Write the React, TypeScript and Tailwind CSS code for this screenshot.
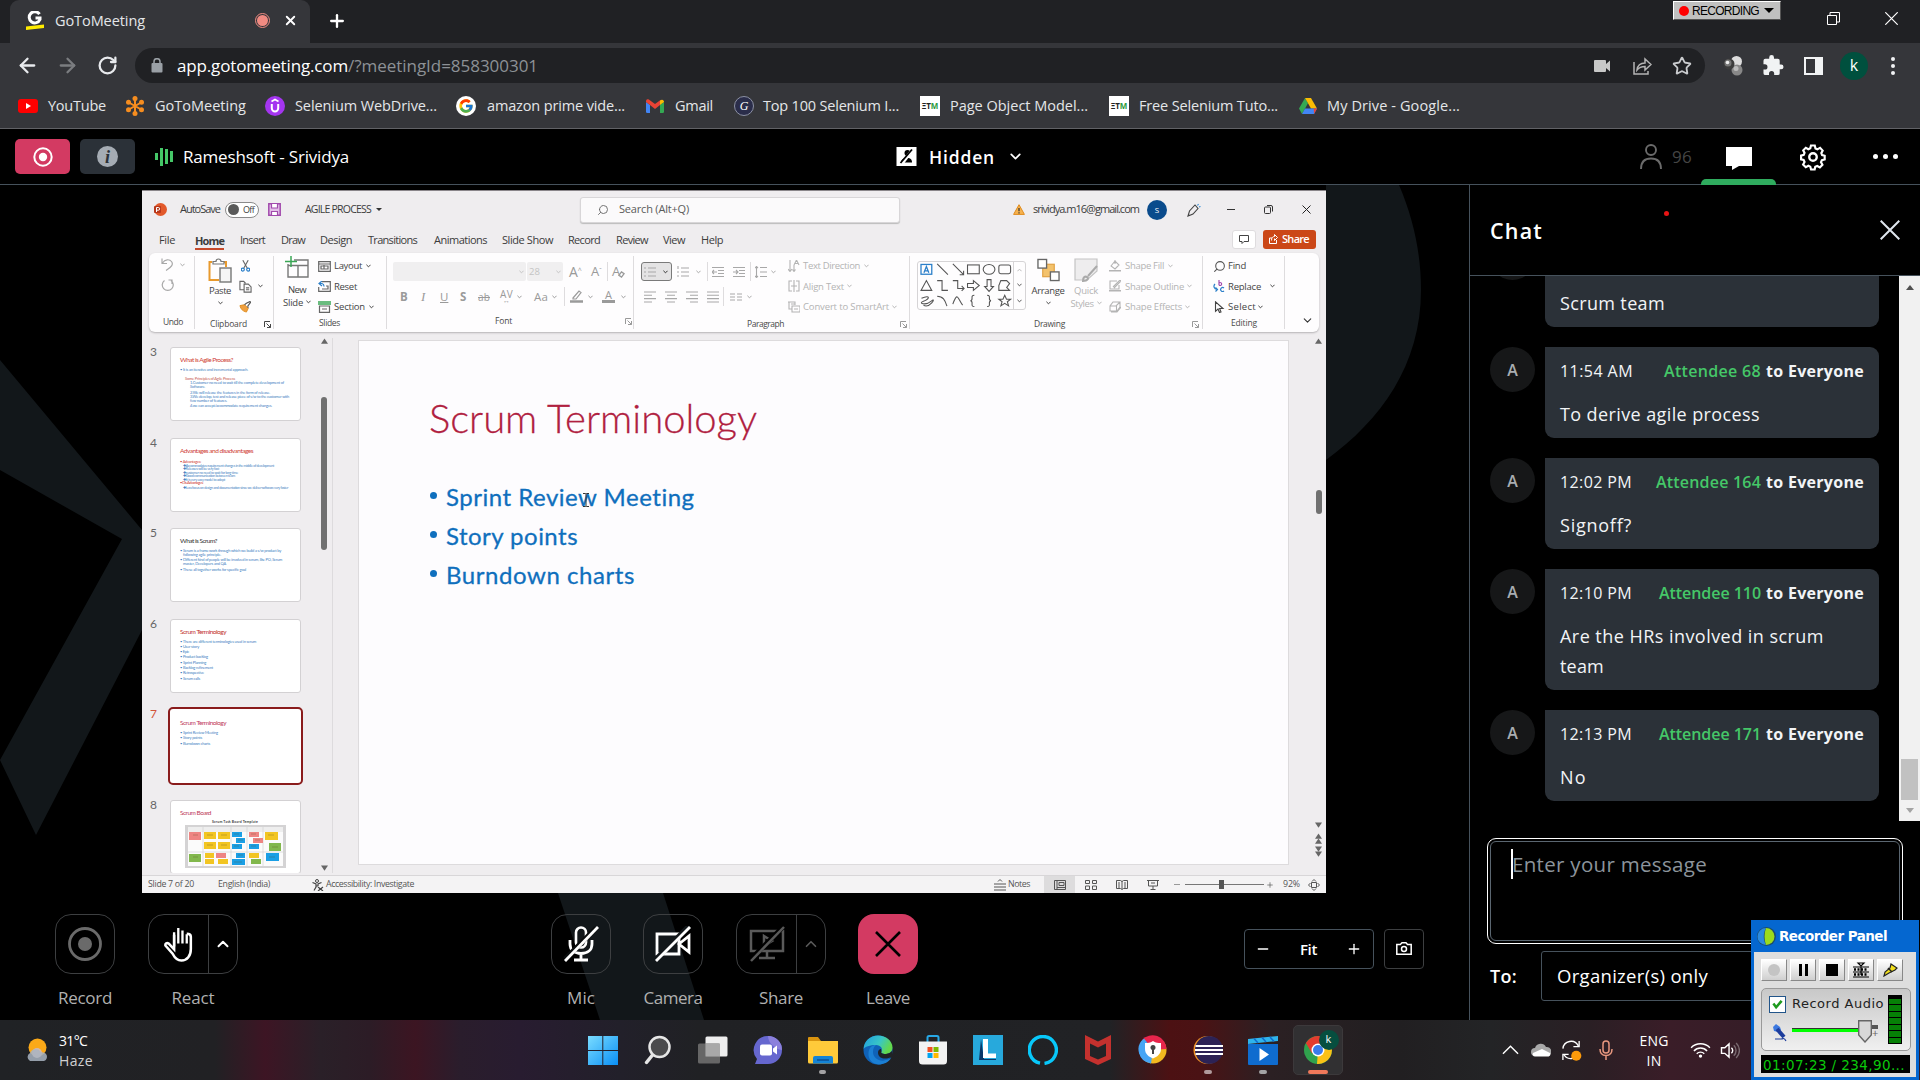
import { useLayoutEffect, useRef, useState, type ReactNode } from "react";
import { ArrowLeft, ArrowRight, Plus, X, RotateCw, ChevronDown, ChevronUp, Star, Minus, Search } from "lucide-react";
import { FcGoogle } from "react-icons/fc";

/* Single-line label whose tracking adapts so that it fills the given width. */
function Fit({ w, className = "", children }: { w: number; className?: string; children: string }) {
  const ref = useRef<HTMLSpanElement>(null);
  const [tracking, setTracking] = useState(0);
  useLayoutEffect(() => {
    const el = ref.current;
    if (!el) return;
    el.style.letterSpacing = "0px";
    setTracking((w - el.getBoundingClientRect().width) / children.length);
  }, [w, children]);
  return (
    <span ref={ref} className={`inline-block shrink-0 whitespace-pre ${className}`} style={{ letterSpacing: `${tracking}px` }}>
      {children}
    </span>
  );
}

function Svg({ box = "0 0 24 24", className, children }: { box?: string; className: string; children: ReactNode }) {
  return (
    <svg viewBox={box} className={`shrink-0 ${className}`} fill="none" stroke="currentColor" strokeWidth={1.5}>
      {children}
    </svg>
  );
}

/* ---------- Browser chrome ---------- */

function TabStrip() {
  return (
    <div className="flex h-[43px] bg-[#202124] pl-[10px]">
      <div className="flex h-[43px] w-[300px] items-center rounded-t-[9px] bg-[#35363a] pb-[2px]">
        <Svg box="0 0 18 19" className="ml-[16px] h-[19px] w-[18px]">
          <path d="M13.500 3.200A5.600 5.600 0 1 0 14 8.500V7H9.500" stroke="#fff" strokeWidth="3" />
          <path d="M0 15.500L18 13.500V17L0 19z" fill="#ffec00" stroke="none" />
        </Svg>
        <Fit w={90} className="ml-[11px] text-[14.5px] text-[#e4e6e9]">GoToMeeting</Fit>
        <div className="ml-[110px] flex size-[15px] items-center justify-center rounded-full border border-[#f28b82]">
          <div className="size-[11px] rounded-full bg-[#f28b82]" />
        </div>
        <X className="ml-[13px] size-[15px] text-white" strokeWidth={3} />
      </div>
      <Plus className="ml-[17px] mt-[11px] size-[20px] text-white" strokeWidth={2.8} />
      <div className="ml-auto flex pt-px">
        <div className="flex h-[19px] w-[108px] items-center border border-t-white border-l-white border-r-[#555] border-b-[#555] bg-[#c0c0c0] pl-[5px] font-['Liberation_Sans'] text-black">
          <div className="size-[10px] rounded-full bg-[#f00]" />
          <Fit w={67} className="ml-[3px] text-[12px]">RECORDING</Fit>
          <div className="ml-[5px] h-0 w-0 border-x-[5px] border-t-[5px] border-x-transparent border-t-black" />
        </div>
        <Svg box="0 0 13 13" className="ml-[46px] mt-[11px] size-[13px] text-white">
          <path d="M.5 3.500h9v9h-9zM3 3.500v-3h9.500v9.500h-3" strokeWidth="1" />
        </Svg>
        <Svg box="0 0 13 13" className="ml-[45px] mr-[22px] mt-[11px] size-[13px] text-white">
          <path d="M.3.3l12.400 12.400M12.700.3L.3 12.700" strokeWidth="1.200" />
        </Svg>
      </div>
    </div>
  );
}

function AddressRow() {
  return (
    <div className="flex h-[45px] items-center bg-[#35363a]">
      <ArrowLeft className="ml-[16px] size-[23px] text-[#e8eaed]" strokeWidth={2.4} />
      <ArrowRight className="ml-[17px] size-[23px] text-[#7b7d80]" strokeWidth={2.4} />
      <RotateCw className="ml-[18px] size-[21px] text-[#e8eaed]" strokeWidth={2.6} />
      <div className="ml-[17px] flex h-[35px] w-[1570px] items-center rounded-full bg-[#202124]">
        <Svg box="0 0 12 15" className="ml-[16px] h-[15px] w-[12px] text-[#9aa0a6]">
          <rect x="0.500" y="5" width="11" height="9.500" rx="1" fill="currentColor" stroke="none" />
          <path d="M3 6V3.700a3 3 0 0 1 6 0V6" />
        </Svg>
        <Fit w={171} className="ml-[14px] text-[17px] text-white">app.gotomeeting.com</Fit>
        <Fit w={190} className="text-[17px] text-[#8d9196]">/?meetingId=858300301</Fit>
        <Svg box="0 0 16 12" className="ml-auto h-[12px] w-[16px] text-[#c8c8c8]">
          <path d="M1 0h10a1 1 0 0 1 1 1v3l4-3.500v11L12 8v3a1 1 0 0 1-1 1H1a1 1 0 0 1-1-1V1a1 1 0 0 1 1-1z" fill="currentColor" stroke="none" />
        </Svg>
        <Svg box="0 0 19 18" className="ml-[23px] h-[18px] w-[19px] text-[#b4b4b4]">
          <path d="M1 5v12h14v-3M4 13c.5-4 3-7 8-7V2l6 5.500-6 5.500V9.500C8 9.500 6 10.500 4 13z" />
        </Svg>
        <Star className="ml-[20px] mr-[13px] size-[20px] text-[#c9cbce]" strokeWidth={2.2} />
      </div>
      <Svg box="0 0 20 20" className="ml-[18px] size-[20px]">
        <circle cx="13.500" cy="5.500" r="5.500" fill="#ddd" stroke="none" />
        <circle cx="14" cy="14" r="5.500" fill="#888" stroke="none" />
        <circle cx="13" cy="12.500" r="2.500" fill="#bbb" stroke="none" />
        <circle cx="6" cy="8" r="5.500" fill="#3c3c3c" stroke="none" />
        <circle cx="5" cy="7" r="3.500" fill="#777" stroke="none" />
        <circle cx="4.500" cy="6.500" r="1.800" fill="#eee" stroke="none" />
      </Svg>
      <svg viewBox="0 0 22 22" className="ml-[20px] size-[21px] shrink-0 fill-[#f1f3f4]">
        <path d="M19 10.500h-1.500V6.500a2 2 0 0 0-2-2h-4V3a2.500 2.500 0 0 0-5 0v1.500h-4a2 2 0 0 0-2 2v3.800H2a2.700 2.700 0 0 1 0 5.400H.5v3.800a2 2 0 0 0 2 2h3.800V20a2.700 2.700 0 0 1 5.400 0v1.500h3.800a2 2 0 0 0 2-2v-4H19a2.500 2.500 0 0 0 0-5z" transform="translate(0 -.5)" />
      </svg>
      <div className="ml-[20px] flex h-[18px] w-[19px] border-[2.500px] border-[#f1f3f4]">
        <div className="ml-auto w-[6px] bg-[#f1f3f4]" />
      </div>
      <div className="ml-[17px] flex size-[28px] items-center justify-center rounded-full bg-[#00503e] pb-px text-[16px] text-white">k</div>
      <div className="ml-[23px] flex flex-col gap-[3px]">
        <div className="size-[4px] rounded-full bg-[#f1f3f4]" />
        <div className="size-[4px] rounded-full bg-[#f1f3f4]" />
        <div className="size-[4px] rounded-full bg-[#f1f3f4]" />
      </div>
    </div>
  );
}

function EtmIcon({ className }: { className: string }) {
  return (
    <div className={`flex h-[20px] w-[20px] shrink-0 items-center justify-center overflow-hidden bg-white text-[8px] font-bold leading-none text-[#222] ${className}`}>
      ΞT<span className="text-[#2c9a40]">M</span>
    </div>
  );
}

function Bookmarks() {
  const text = "text-[14.5px] text-[#e4e6e9]";
  return (
    <div className="flex h-[41px] items-center border-b border-[#616266] bg-[#35363a] pb-[4px]">
      <Svg box="0 0 20 14" className="ml-[18px] h-[14px] w-[20px]">
        <rect width="20" height="14" rx="3" fill="#f00" stroke="none" />
        <path d="M8 4l5 3-5 3z" fill="#fff" stroke="none" />
      </Svg>
      <Fit w={58} className={`ml-[10px] ${text}`}>YouTube</Fit>
      <Svg box="0 0 20 20" className="ml-[19px] size-[20px] text-[#f68d1f]">
        <path d="M10 2v16M3 6l14 8M17 6L3 14" strokeWidth="2" />
        <g fill="currentColor" stroke="none">
          <circle cx="10" cy="2.500" r="2.500" /><circle cx="10" cy="17.500" r="2.500" />
          <circle cx="3.500" cy="6.200" r="2.500" /><circle cx="16.500" cy="6.200" r="2.500" />
          <circle cx="3.500" cy="13.800" r="2.500" /><circle cx="16.500" cy="13.800" r="2.500" />
        </g>
      </Svg>
      <Fit w={91} className={`ml-[10px] ${text}`}>GoToMeeting</Fit>
      <Svg box="0 0 20 20" className="ml-[19px] size-[20px]">
        <circle cx="10" cy="10" r="10" fill="#a435f0" stroke="none" />
        <path d="M6.800 8v4.300a3.200 3.200 0 0 0 6.400 0V8" stroke="#fff" strokeWidth="2" />
        <path d="M6.500 5.500L10 3.500l3.500 2" stroke="#fff" strokeWidth="1.700" />
      </Svg>
      <Fit w={142} className={`ml-[10px] ${text}`}>Selenium WebDrive...</Fit>
      <div className="ml-[19px] flex size-[20px] shrink-0 items-center justify-center rounded-full bg-white">
        <FcGoogle className="size-[16px]" />
      </div>
      <Fit w={138} className={`ml-[11px] ${text}`}>amazon prime vide...</Fit>
      <Svg box="0 0 18 14" className="ml-[21px] h-[14px] w-[18px]">
        <g stroke="none">
          <path d="M0 3l4 3v8H1.200A1.200 1.200 0 0 1 0 12.800z" fill="#4285f4" />
          <path d="M18 3l-4 3v8h2.800a1.200 1.200 0 0 0 1.200-1.200z" fill="#34a853" />
          <path d="M0 3V2a2 2 0 0 1 3.500-1L9 5v5L4 6z" fill="#ea4335" />
          <path d="M9 5l5.500-4L14 6l-5 4z" fill="#ea4335" />
          <path d="M14 1.500L15 1a2 2 0 0 1 3 1.500V3l-4 3z" fill="#fbbc04" />
        </g>
      </Svg>
      <Fit w={38} className={`ml-[11px] ${text}`}>Gmail</Fit>
      <div className="ml-[21px] flex size-[20px] shrink-0 items-center justify-center rounded-full border border-[#8b90a3] bg-[#2a2d4a] font-['Liberation_Serif'] text-[12px] italic text-white">G</div>
      <Fit w={136} className={`ml-[9px] ${text}`}>Top 100 Selenium I...</Fit>
      <EtmIcon className="ml-[21px]" />
      <Fit w={138} className={`ml-[10px] ${text}`}>Page Object Model...</Fit>
      <EtmIcon className="ml-[21px]" />
      <Fit w={139} className={`ml-[10px] ${text}`}>Free Selenium Tuto...</Fit>
      <Svg box="0 0 18 16" className="ml-[21px] h-[16px] w-[18px]">
        <g stroke="none">
          <path d="M6 0L0 10.500 3 16 9 5.300z" fill="#34a853" />
          <path d="M6 0h6l6 10.500h-6z" fill="#fbbc04" />
          <path d="M6 10.500h12L15 16H3z" fill="#4285f4" />
          <path d="M14.800 10.500H18L15 16z" fill="#ea4335" />
        </g>
      </Svg>
      <Fit w={133} className={`ml-[10px] ${text}`}>My Drive - Google...</Fit>
    </div>
  );
}

/* ---------- Meeting header ---------- */

function MeetingHeader() {
  return (
    <div className="flex h-[56px] items-center border-b border-[#46525c] bg-black">
      <div className="ml-[15px] flex h-[35px] w-[55px] items-center justify-center rounded-[5px] bg-[#d33a62]">
        <Svg box="0 0 20 20" className="size-[20px] text-white">
          <circle cx="10" cy="10" r="8.700" strokeWidth="2" />
          <circle cx="10" cy="10" r="4.200" fill="currentColor" stroke="none" />
        </Svg>
      </div>
      <div className="ml-[10px] flex h-[35px] w-[55px] items-center justify-center rounded-[5px] bg-[#2b3138]">
        <div className="flex size-[21px] items-center justify-center rounded-full bg-[#a5acb4] font-['Liberation_Serif'] text-[18px] font-bold italic leading-none text-[#2b3138]">i</div>
      </div>
      <div className="ml-[20px] flex h-[18px] w-[18px] items-center justify-between">
        <div className="h-[7px] w-[3px] bg-[#45c768]" />
        <div className="h-[18px] w-[3px] bg-[#45c768]" />
        <div className="h-[15px] w-[3px] bg-[#45c768]" />
        <div className="h-[11px] w-[3px] bg-[#45c768]" />
      </div>
      <Fit w={166} className="ml-[10px] text-[17px] text-white">Rameshsoft - Srividya</Fit>
      <Svg box="0 0 20 19" className="ml-[547px] h-[19px] w-[21px]">
        <rect width="20" height="19" fill="#fff" stroke="none" />
        <circle cx="11" cy="6" r="3" fill="#000" stroke="none" />
        <path d="M4.500 15.500c0-2.500 2-4.500 6-4.500s5 2 5 4.500z" fill="#000" stroke="none" />
        <path d="M5 17.500L16 2.500" stroke="#fff" strokeWidth="3" />
        <path d="M4 16L15.500 2.500" stroke="#000" strokeWidth="1.800" />
      </Svg>
      <Fit w={66} className="ml-[12px] mt-[2px] text-[17.5px] font-semibold text-white">Hidden</Fit>
      <ChevronDown className="ml-[12px] size-[17px] text-white" strokeWidth={2.4} />
      <div className="ml-auto flex items-center">
        <Svg box="0 0 22 25" className="h-[25px] w-[22px] text-[#6b6b6b]">
          <circle cx="11" cy="6" r="5" strokeWidth="1.900" />
          <path d="M1 25c0-7 4-10.500 10-10.500S21 18 21 25" strokeWidth="1.900" />
        </Svg>
        <Fit w={20} className="ml-[10px] text-[17px] text-[#454545]">96</Fit>
        <div className="ml-[9px] flex h-[56px] w-[75px] flex-col items-center justify-end">
          <Svg box="0 0 26 23" className="mb-[9px] h-[23px] w-[26px]">
            <path d="M0 0h26v19H13l-7 4v-4H0z" fill="#fff" stroke="none" />
          </Svg>
          <div className="h-[6px] w-[75px] rounded-t-[5px] bg-[#2fab5e]" />
        </div>
        <Svg className="ml-[22px] size-[30px] text-white">
          <path d="M10.300 2h3.400l.6 2.600 1.700.8 2.400-1.300 2.300 2.400-1.200 2.300.7 1.700 2.300.7v3.200l-2.500.7-.8 1.700 1.300 2.300-2.300 2.400-2.300-1.300-1.800.8-.5 2.300h-3.200l-.7-2.500-1.700-.8-2.300 1.300-2.400-2.400 1.300-2.300-.8-1.700-2.300-.6v-3.300l2.400-.7.7-1.700-1.200-2.300L5.700 4l2.300 1.300 1.700-.8z" strokeWidth="1.900" transform="translate(1.100 1) scale(.9)" />
          <circle cx="12" cy="12" r="3" strokeWidth="1.900" />
        </Svg>
        <div className="ml-[45px] mr-[22px] flex gap-[5px]">
          <div className="size-[5px] rounded-full bg-white" />
          <div className="size-[5px] rounded-full bg-white" />
          <div className="size-[5px] rounded-full bg-white" />
        </div>
      </div>
    </div>
  );
}

/* ---------- Shared PowerPoint window ---------- */

function Chev({ className = "" }: { className?: string }) {
  return (
    <svg viewBox="0 0 6 4" className={`h-[4px] w-[5px] shrink-0 ${className}`} fill="none" stroke="currentColor" strokeWidth="1.200">
      <path d="M.5.5L3 3 5.500.5" />
    </svg>
  );
}

function Launcher({ className }: { className: string }) {
  return (
    <Svg box="0 0 7 7" className={`size-[7px] ${className}`}>
      <path d="M.5 6V.5H6M2.500 2.500l4 4M6.500 3v3.500H3" strokeWidth="1" />
    </Svg>
  );
}

function PptTitleBar() {
  return (
    <div className="flex h-[37px] items-center text-[11px] text-[#3c3c3c]">
      <Svg box="0 0 13 13" className="ml-[12px] size-[13px]">
        <circle cx="6.500" cy="6.500" r="6.500" fill="#e2592b" stroke="none" />
        <rect x="0" y="3" width="7" height="7" rx="1" fill="#b7371a" stroke="none" />
        <path d="M2.500 9V4.500h1.800a1.300 1.300 0 0 1 0 2.700H2.500" stroke="#fff" strokeWidth="1" />
      </Svg>
      <Fit w={40} className="ml-[13px]">AutoSave</Fit>
      <div className="ml-[5px] flex h-[16px] w-[34px] items-center rounded-full border border-[#8a8a8a] bg-white pl-[2px]">
        <div className="size-[11px] rounded-full bg-[#5a5a5a]" />
        <Fit w={11} className="ml-[4px] text-[9px]">Off</Fit>
      </div>
      <Svg box="0 0 13 13" className="ml-[9px] size-[13px] text-[#a24bad]">
        <path d="M.8.8h11.400v11.400H.8z" fill="#e3bfe8" />
        <path d="M3.500 1v4h6V1M3.500 12V8.500h6V12" fill="#fff" strokeWidth="1.200" />
      </Svg>
      <Fit w={66} className="ml-[24px] text-[10.5px]">AGILE PROCESS</Fit>
      <div className="ml-[5px] h-0 w-0 border-x-[3px] border-t-[3px] border-x-transparent border-t-[#333]" />
      <div className="ml-[198px] flex h-[26px] w-[320px] items-center rounded-[3px] border border-[#d8d6d8] bg-[#fbfafb] shadow-[0_1px_1px_#bbb]">
        <Search className="ml-[16px] size-[12px] -scale-x-100 text-[#666]" strokeWidth={1.8} />
        <Fit w={70} className="ml-[10px] text-[11px] text-[#5a5a5a]">Search (Alt+Q)</Fit>
      </div>
      <Svg box="0 0 12 11" className="ml-[113px] h-[11px] w-[12px]">
        <path d="M6 .7L11.400 10.400H.6z" fill="#f6b24f" stroke="#e08b1c" strokeWidth="1" />
        <path d="M6 4v3.300M6 8.200v1.200" stroke="#333" strokeWidth="1.200" />
      </Svg>
      <Fit w={106} className="ml-[8px]">srividya.m16@gmail.com</Fit>
      <div className="ml-[8px] flex size-[20px] items-center justify-center rounded-full bg-[#0a4b8c] text-[8px] text-white">S</div>
      <Svg box="0 0 14 14" className="ml-[20px] size-[14px] text-[#444]">
        <path d="M1 13l1.500-5L8 2l3 3.500-5 5.500zM3 12l-2 1" strokeWidth="1.100" />
        <path d="M10.500 2.500l1-1.500M12 4l1.500-.5" stroke="#2b8ad6" strokeWidth="1.100" />
      </Svg>
      <div className="ml-[26px] h-px w-[8px] bg-[#333]" />
      <Svg box="0 0 9 9" className="ml-[29px] size-[9px] text-[#333]">
        <path d="M.5 3a1 1 0 0 1 1-1H5.500a1 1 0 0 1 1 1v4.500a1 1 0 0 1-1 1h-4a1 1 0 0 1-1-1zM3 .5h4A1.500 1.500 0 0 1 8.500 2v4.500" strokeWidth="1" />
      </Svg>
      <Svg box="0 0 9 9" className="ml-[29px] size-[9px] text-[#222]">
        <path d="M.5.5l8 8M8.500.5l-8 8" strokeWidth="1" />
      </Svg>
    </div>
  );
}

function PptTabs() {
  return (
    <div className="flex h-[25px] items-center text-[11px] text-[#3c3c3c]">
      <Fit w={16} className="ml-[17px]">File</Fit>
      <div className="ml-[20px] border-b-2 border-[#c5492a] pt-[2px] leading-[15px]">
        <Fit w={29} className="font-bold">Home</Fit>
      </div>
      <Fit w={25} className="ml-[16px]">Insert</Fit>
      <Fit w={24} className="ml-[16px]">Draw</Fit>
      <Fit w={32} className="ml-[15px]">Design</Fit>
      <Fit w={49} className="ml-[16px]">Transitions</Fit>
      <Fit w={53} className="ml-[17px]">Animations</Fit>
      <Fit w={51} className="ml-[15px]">Slide Show</Fit>
      <Fit w={32} className="ml-[15px]">Record</Fit>
      <Fit w={32} className="ml-[16px]">Review</Fit>
      <Fit w={22} className="ml-[15px]">View</Fit>
      <Fit w={22} className="ml-[16px]">Help</Fit>
      <div className="ml-auto mb-[3px] flex h-[19px] w-[24px] items-center justify-center rounded-[3px] border border-[#dedcde] bg-white">
        <Svg box="0 0 10 9" className="h-[9px] w-[10px] text-[#444]">
          <path d="M.5.5h9v6H5L3 8.500v-2H.5z" strokeWidth="1" />
        </Svg>
      </div>
      <div className="mb-[3px] ml-[7px] mr-[10px] flex h-[19px] w-[53px] items-center rounded-[3px] bg-[#cb4717] text-white">
        <Svg box="0 0 9 10" className="ml-[6px] h-[10px] w-[9px]">
          <path d="M3 4H.5v5.500h7V6M2.500 6.500c0-3 1.500-4 3-4V.5l3 3-3 3v-2" strokeWidth="1" />
        </Svg>
        <Fit w={27} className="ml-[4px] font-semibold">Share</Fit>
      </div>
    </div>
  );
}

function GroupLabel({ w, children, className = "" }: { w: number; children: string; className?: string }) {
  return (
    <div className={`flex h-[15px] items-center text-[8.500px] text-[#4a4a4a] ${className}`}>
      <Fit w={w}>{children}</Fit>
    </div>
  );
}

function Lines({ className, rows }: { className: string; rows: string }) {
  return (
    <Svg box="0 0 12 12" className={`size-[12px] ${className}`}>
      <path d={rows} strokeWidth="1.100" />
    </Svg>
  );
}

function Ribbon() {
  const row = "flex h-[20.500px] items-center";
  return (
    <div className="ml-[7px] flex h-[79px] w-[1170px] rounded-[6px] bg-[#fefdfe] text-[9.500px] leading-none text-[#444] shadow-[0_1px_2px_#b5b3b5]">
      {/* Undo */}
      <div className="my-[3px] flex w-[46px] flex-col border-r border-[#dedcde]">
        <div className="flex h-[61px] flex-col pl-[12px] pt-[2px] text-[#a8a8a8]">
          <div className="flex items-center">
            <Svg box="0 0 12 13" className="h-[13px] w-[12px]">
              <path d="M1 .5v5h5M1.500 5C4 1 8.500 1 10.500 3.500S11 9 5 12.500" strokeWidth="1.200" />
            </Svg>
            <Chev className="ml-[7px]" />
          </div>
          <Svg box="0 0 13 13" className="mt-[8px] size-[13px]">
            <path d="M3.500 1.500a5.500 5.500 0 1 0 6.500 0M7.500 1H11v4" strokeWidth="1.200" />
          </Svg>
        </div>
        <GroupLabel w={20} className="pl-[14px]">Undo</GroupLabel>
      </div>
      {/* Clipboard */}
      <div className="my-[3px] flex w-[79px] flex-col border-r border-[#dedcde]">
        <div className="flex h-[61px]">
          <div className="ml-[13px] flex w-[24px] flex-col items-center pt-[2px]">
            <Svg box="0 0 24 25" className="h-[25px] w-[24px]">
              <path d="M4 4H1.500v18H11" stroke="#e89a2e" strokeWidth="2" />
              <path d="M15 4h3v5" stroke="#e89a2e" strokeWidth="2" />
              <path d="M5 6V3.500h3a2.500 2.500 0 0 1 5 0h3V6z" fill="#fff" stroke="#777" strokeWidth="1.200" />
              <rect x="12" y="10" width="11" height="14" fill="#f5f5f5" stroke="#777" strokeWidth="1.400" />
            </Svg>
            <Fit w={22} className="mt-[3px]">Paste</Fit>
            <Chev className="mt-[5px]" />
          </div>
          <div className="ml-[7px] flex flex-col">
            <div className={row}>
              <Svg box="0 0 10 13" className="ml-[2px] h-[12px] w-[9px]">
                <path d="M2 0l5 9M8 0L3 9" stroke="#666" strokeWidth="1.200" />
                <circle cx="2" cy="10.500" r="1.700" stroke="#2b7fc9" strokeWidth="1.300" />
                <circle cx="8" cy="10.500" r="1.700" stroke="#2b7fc9" strokeWidth="1.300" />
              </Svg>
            </div>
            <div className={row}>
              <Svg box="0 0 14 13" className="h-[13px] w-[13px] text-[#666]">
                <path d="M5 10H1V1h4l2 2M5.500 4h4.500l3 3v5.500H5.500zM7.500 8h3.500M7.500 10h3.500" strokeWidth="1.200" />
              </Svg>
              <Chev className="ml-[6px]" />
            </div>
            <div className={row}>
              <Svg box="0 0 13 13" className="size-[12px]">
                <path d="M1 5l5-1 4 4-2 4C4 11 2 9 1 5z" fill="#f0a040" stroke="#e08b1c" strokeWidth="1" />
                <path d="M6 4l2 -1.500L12 .5l.5 1-3 4 .5 2" stroke="#555" strokeWidth="1.200" />
              </Svg>
            </div>
          </div>
        </div>
        <div className="flex items-center">
          <GroupLabel w={37} className="ml-[15px]">Clipboard</GroupLabel>
          <Launcher className="ml-[17px]" />
        </div>
      </div>
      {/* Slides */}
      <div className="my-[3px] flex w-[113px] flex-col border-r border-[#dedcde]">
        <div className="flex h-[61px]">
          <div className="ml-[9px] flex w-[28px] flex-col items-center">
            <Svg box="0 0 24 22" className="h-[22px] w-[24px]">
              <path d="M3 8v13h20V4H9M3 9.500h20M13 9.500V21" stroke="#777" strokeWidth="1.400" />
              <path d="M6 0v11M0 5.500h12" stroke="#3aa655" strokeWidth="1.500" />
            </Svg>
            <Fit w={18} className="mt-[7px]">New</Fit>
            <div className="mt-[3px] flex items-center gap-[3px]">
              <Fit w={20}>Slide</Fit>
              <Chev />
            </div>
          </div>
          <div className="ml-[7px] flex flex-col">
            <div className={row}>
              <Svg box="0 0 13 11" className="h-[11px] w-[13px] text-[#666]">
                <path d="M.7.7h11.600v9.600H.7zM1 3h11M6 4v4h4V5H3v3h3" strokeWidth="1.200" />
              </Svg>
              <Fit w={28} className="ml-[3px]">Layout</Fit>
              <Chev className="ml-[4px]" />
            </div>
            <div className={row}>
              <Svg box="0 0 13 11" className="h-[11px] w-[13px] text-[#666]">
                <path d="M4 .7h8.300v9.600H.7V6M8 5h2v3H4" strokeWidth="1.200" />
                <path d="M4 0L1 2.500 4 5M1 2.500h3a3 3 0 0 1 2 3" stroke="#2b7fc9" strokeWidth="1.200" />
              </Svg>
              <Fit w={23} className="ml-[3px]">Reset</Fit>
            </div>
            <div className={row}>
              <Svg box="0 0 13 12" className="h-[12px] w-[13px] text-[#666]">
                <path d="M0 1h13M0 3h13" stroke="#3aa655" strokeWidth="1.300" />
                <path d="M1.500 5h10v6.300h-10zM4 8h5" strokeWidth="1.200" />
              </Svg>
              <Fit w={31} className="ml-[3px]">Section</Fit>
              <Chev className="ml-[4px]" />
            </div>
          </div>
        </div>
        <GroupLabel w={21} className="pl-[45px]">Slides</GroupLabel>
      </div>
      {/* Font */}
      <div className="my-[3px] flex w-[247px] flex-col border-r border-[#dedcde] text-[#9a9a9a]">
        <div className="flex h-[61px] flex-col pl-[6px] pt-[6px]">
          <div className="flex h-[19px] items-center">
            <div className="flex h-[19px] w-[133px] items-center justify-end rounded-[2px] bg-[#f0eff0] pr-[2px] text-[#c4c4c4]"><Chev /></div>
            <div className="ml-px flex h-[19px] w-[36px] items-center rounded-[2px] bg-[#f0eff0] pl-[2px] text-[#c4c4c4]">
              <Fit w={11}>28</Fit><Chev className="ml-auto mr-[2px]" />
            </div>
            <span className="ml-[6px] text-[14px]">A<sup className="text-[7px]">^</sup></span>
            <span className="ml-[9px] text-[13px]">A<sup className="text-[7px]">ˇ</sup></span>
            <div className="ml-[5px] h-[19px] w-px bg-[#dedcde]" />
            <span className="ml-[4px] text-[13px]">A</span>
            <Svg box="0 0 8 8" className="mt-[6px] -ml-[2px] size-[7px]"><path d="M1 5l3-4 3 2-3 4z" /></Svg>
          </div>
          <div className="mt-[6px] flex h-[19px] items-center text-[11.500px]">
            <b className="ml-[7px] w-[20px]">B</b>
            <i className="w-[20px] pl-px font-['Liberation_Serif'] text-[13px]">I</i>
            <u className="w-[20px]">U</u>
            <b className="w-[18px]">S</b>
            <s className="w-[22px]"><Fit w={12} className="text-[10px] line-through">ab</Fit></s>
            <span className="flex w-[13px] flex-col items-center leading-[9px] text-[10px]"><Fit w={13}>AV</Fit><span className="text-[7px] leading-[4px]">↔</span></span>
            <Chev className="ml-[4px]" />
            <Fit w={14} className="ml-[12px]">Aa</Fit>
            <Chev className="ml-[4px]" />
            <div className="ml-[7px] h-[19px] w-px bg-[#dedcde]" />
            <Svg box="0 0 13 13" className="ml-[5px] size-[13px]">
              <path d="M3 8l6-7 2 1.500L6 9H3z" strokeWidth="1.200" /><path d="M0 11.500h13" strokeWidth="2.500" />
            </Svg>
            <Chev className="ml-[5px]" />
            <span className="ml-[9px] w-[13px] border-b-[3px] border-[#9a9a9a] text-center text-[11px] leading-[10px]">A</span>
            <Chev className="ml-[6px]" />
          </div>
        </div>
        <div className="flex items-center">
          <GroupLabel w={17} className="ml-[108px]">Font</GroupLabel>
          <Launcher className="ml-[113px] text-[#999]" />
        </div>
      </div>
      {/* Paragraph */}
      <div className="my-[3px] flex w-[276px] flex-col border-r border-[#dedcde] text-[#a8a8a8]">
        <div className="flex h-[61px]">
          <div className="flex w-[154px] flex-col pl-[7px] pt-[6px]">
            <div className="flex h-[19px] items-center">
              <div className="flex h-[19px] w-[31px] items-center rounded-[3px] border border-[#7a7a7a] bg-[#e4e3e4] pl-[2px]">
                <Lines className="" rows="M0 2h2M0 6h2M0 10h2M4 2h8M4 6h8M4 10h8" />
                <Chev className="ml-[7px] text-[#333]" />
              </div>
              <Lines className="ml-[5px]" rows="M1 0v3M0 6h2M0 10h2M4 2h8M4 6h8M4 10h8" />
              <Chev className="ml-[7px]" />
              <div className="ml-[6px] h-[19px] w-px bg-[#dedcde]" />
              <Lines className="ml-[4px]" rows="M0 1.500h12M6 4.500h6M6 7.500h6M0 10.500h12M5 6H0M2 4L0 6l2 2" />
              <Lines className="ml-[9px]" rows="M0 1.500h12M6 4.500h6M6 7.500h6M0 10.500h12M0 6h5M3 4l2 2-2 2" />
              <div className="ml-[5px] h-[19px] w-px bg-[#dedcde]" />
              <Lines className="ml-[4px]" rows="M1.500 0v12M0 2l1.500-1.500L3 2M0 10l1.500 1.500L3 10M5 1.500h7M5 6h7M5 10.500h7" />
              <Chev className="ml-[4px]" />
            </div>
            <div className="mt-[6px] flex h-[19px] items-center">
              <Lines className="ml-[3px]" rows="M0 1h12M0 4.300h8M0 7.600h12M0 11h8" />
              <Lines className="ml-[9px]" rows="M0 1h12M2 4.300h8M0 7.600h12M2 11h8" />
              <Lines className="ml-[9px]" rows="M0 1h12M4 4.300h8M0 7.600h12M4 11h8" />
              <Lines className="ml-[9px]" rows="M0 1h12M0 4.300h12M0 7.600h12M0 11h12" />
              <div className="ml-[4px] h-[19px] w-px bg-[#dedcde]" />
              <Lines className="ml-[6px]" rows="M0 3h5M7 3h5M0 6h5M7 6h5M0 9h5M7 9h5" />
              <Chev className="ml-[5px]" />
            </div>
          </div>
          <div className="flex flex-col text-[#b4b4b4]">
            <div className={row}>
              <Lines className="" rows="M2 0v11M0 9l2 2.500L4 9M6 11V5M4.500 9.500L6 11.500 7.500 9.500M6 5l2.500-5L11 5M7 3.500h3" />
              <Fit w={57} className="ml-[3px]">Text Direction</Fit>
              <Chev className="ml-[4px]" />
            </div>
            <div className={row}>
              <Lines className="" rows="M4 1H1v10h3M8 1h3v10H8M6 0v12M3 6h6" />
              <Fit w={41} className="ml-[3px]">Align Text</Fit>
              <Chev className="ml-[3px]" />
            </div>
            <div className={row}>
              <Lines className="" rows="M0 1h7v3M1 1v7h3M4 5h8v6H4zM6 8h4M3 3h4" />
              <Fit w={86} className="ml-[3px]">Convert to SmartArt</Fit>
              <Chev className="ml-[3px]" />
            </div>
          </div>
        </div>
        <div className="flex items-center">
          <GroupLabel w={37} className="ml-[113px]">Paragraph</GroupLabel>
          <Launcher className="ml-[116px] text-[#999]" />
        </div>
      </div>
      {/* Drawing */}
      <div className="my-[3px] flex w-[293px] flex-col border-r border-[#dedcde]">
        <div className="flex h-[61px]">
          <div className="ml-[7px] mt-[5px] flex h-[49px] w-[109px] rounded-[3px] border border-[#d6d4d6] text-[#555]">
            <svg viewBox="0 0 96 48" className="h-[47px] w-[96px]" fill="none" stroke="currentColor" strokeWidth="1.100">
              <rect x="2.500" y="2.500" width="11" height="10" stroke="#2b7fc9" strokeWidth="1.300" />
              <path d="M5.500 11L8 4.500 10.500 11M6.500 9h3" stroke="#2b7fc9" strokeWidth="1.300" />
              <path d="M19 2l11 11M35 2l11 11M46 9v4h-4" />
              <rect x="50" y="3" width="12" height="9" />
              <ellipse cx="72" cy="7.500" rx="6" ry="5" />
              <rect x="82" y="3" width="12" height="9" rx="2" />
              <path d="M2.500 29L8 19l5.500 10zM19 19h5v10h6M35 19h5v8h6M44 24.500l2.500 2.500-2.500 2.500" />
              <path d="M50 22h6v-3l6 5-6 5v-3h-6zM70 18v7h-2.500l4.500 5 4.500-5H74v-7zM90 19h-6l-2 5v5h11l-3-3 3-4z" />
              <path d="M3 37c10-4 8 1 2 3s2 5 8 0-2 8-8 4M19 35c6 0 8 4 10 10M35 43c5-14 5-5 10 1M57 34c-5 0 0 5-4 5.500 4 .5-1 6 4 6M70 34c5 0 0 5 4 5.500-4 .5 1 6-4 6M88 34l1.800 4h4.200l-3.300 2.600 1.200 4.200-3.900-2.500-3.900 2.500 1.200-4.200L82 38h4.200z" />
            </svg>
            <div className="flex w-[12px] flex-col items-center justify-around border-l border-[#d6d4d6]">
              <Chev className="rotate-180 text-[#bbb]" />
              <Chev />
              <Chev />
            </div>
          </div>
          <div className="ml-[5px] flex w-[34px] flex-col items-center pt-[2px]">
            <Svg box="0 0 24 24" className="h-[24px] w-[23px]">
              <rect x="6" y="6" width="12" height="13" fill="#f3c26c" stroke="#e0a040" strokeWidth="1.200" />
              <rect x="1" y="1" width="9" height="9" fill="#fff" stroke="#666" strokeWidth="1.400" />
              <rect x="14" y="14" width="9" height="9" fill="#fff" stroke="#666" strokeWidth="1.400" />
            </Svg>
            <Fit w={33} className="mt-[4px]">Arrange</Fit>
            <Chev className="mt-[5px]" />
          </div>
          <div className="ml-[6px] flex w-[30px] flex-col items-center pt-[2px] text-[#b4b4b4]">
            <Svg box="0 0 24 24" className="h-[24px] w-[24px]">
              <path d="M1 1h22v12L13 22H1z" fill="#eeedee" stroke="#c4c4c4" strokeWidth="1.200" />
              <path d="M23 8l-9 10M9 23c0-4 2-5 4-4s1 4-4 4z" stroke="#aaa" strokeWidth="2" />
            </Svg>
            <Fit w={24} className="mt-[4px]">Quick</Fit>
            <div className="mt-[3px] flex items-center gap-[3px]">
              <Fit w={23}>Styles</Fit>
              <Chev />
            </div>
          </div>
          <div className="ml-[8px] flex flex-col text-[#b4b4b4]">
            <div className={row}>
              <Lines className="" rows="M2 6l4-5 4 4-4 4zM6 0v4M0 11h12M0 10.500h12" />
              <Fit w={39} className="ml-[4px]">Shape Fill</Fit>
              <Chev className="ml-[4px]" />
            </div>
            <div className={row}>
              <Lines className="" rows="M8 1H1v8h9V5M4 7l7-7 1 1-7 7M0 11h12M0 10.500h12" />
              <Fit w={59} className="ml-[4px]">Shape Outline</Fit>
              <Chev className="ml-[3px]" />
            </div>
            <div className={row}>
              <Lines className="" rows="M4 1h7v5l-3 4H1V5zM1 5h6l4-4M7.500 5v5M2 11h6l4-5" />
              <Fit w={57} className="ml-[4px]">Shape Effects</Fit>
              <Chev className="ml-[3px]" />
            </div>
          </div>
        </div>
        <div className="flex items-center">
          <GroupLabel w={31} className="ml-[124px]">Drawing</GroupLabel>
          <Launcher className="ml-[127px] text-[#999]" />
        </div>
      </div>
      {/* Editing */}
      <div className="my-[3px] flex w-[82px] flex-col border-r border-[#dedcde]">
        <div className="flex h-[61px] flex-col pl-[10px]">
          <div className={row}>
            <Search className="size-[13px] -scale-x-100 text-[#555]" strokeWidth={2} />
            <Fit w={18} className="ml-[2px]">Find</Fit>
          </div>
          <div className={row}>
            <Svg box="0 0 12 12" className="size-[12px]">
              <path d="M6 0v5M6 3a1.500 1.500 0 1 1 0 2" stroke="#a24bad" strokeWidth="1.200" />
              <path d="M2 4C0 6 1 9 4 9.500M2.500 7.500L4.500 9.500 2.500 11.500M11 8a2 2 0 1 0 0 3" stroke="#2b7fc9" strokeWidth="1.200" />
            </Svg>
            <Fit w={33} className="ml-[3px]">Replace</Fit>
            <Chev className="ml-[9px]" />
          </div>
          <div className={row}>
            <Svg box="0 0 12 12" className="size-[12px] text-[#444]">
              <path d="M2.500.8v9.500l2.500-2.300 1.500 3.500 1.500-.6-1.400-3.400H10z" strokeWidth="1.100" />
            </Svg>
            <Fit w={28} className="ml-[3px]">Select</Fit>
            <Chev className="ml-[2px]" />
          </div>
        </div>
        <GroupLabel w={26} className="ml-[28px]">Editing</GroupLabel>
      </div>
      <ChevronDown className="ml-[16px] mt-[61px] size-[13px] text-[#333]" strokeWidth={2} />
    </div>
  );
}

function Thumb({ n, children, active = false }: { n: string; children: ReactNode; active?: boolean }) {
  return (
    <div className="flex h-[90.500px] shrink-0">
      <div className={`w-[28px] pl-[8px] text-[12px] leading-[10px] ${active ? "text-[#d2553a]" : "text-[#666]"}`}>{n}</div>
      <div
        className={
          active
            ? "-ml-[2px] -mt-[2px] h-[78px] w-[135px] rounded-[5px] border-2 border-[#8a1c1c] bg-white pl-[10px] pt-[11px]"
            : "h-[74px] w-[131px] rounded-[3px] border border-[#d3d1d3] bg-white pl-[9px] pt-[8px]"
        }
      >
        {children}
      </div>
    </div>
  );
}

function Mini({ w, size = "text-[4px]", className = "", color = "text-[#3f7fbf]", children }: { w: number; size?: string; className?: string; color?: string; children: string }) {
  return (
    <div className={`flex ${color} ${size} ${className}`}>
      <Fit w={w}>{children}</Fit>
    </div>
  );
}

const terms: [string, number][] = [
  ["• There are different terminologies used in scrum", 76],
  ["• User story", 19],
  ["• Epic", 9],
  ["• Product backlog", 28],
  ["• Sprint Planning", 26],
  ["• Backlog refinement", 33],
  ["• Retrospective", 24],
  ["• Scrum calls", 20],
];

function Thumbs() {
  const title = "text-[6.500px] leading-[7px]";
  return (
    <div className="flex h-[535px] w-[178px] flex-col overflow-hidden pt-[9px] font-['Lato']">
      <Thumb n="3">
        <Mini w={53} size={title} color="text-[#cf4136]">What is Agile Process?</Mini>
        <Mini w={68} className="mt-[4px] leading-[6px]">• It is an iterative and incremental approach.</Mini>
        <Mini w={50} className="ml-[5px] mt-[3px] leading-[5px]" color="text-[#c85a50]">Some Principles of Agile Process</Mini>
        <Mini w={94} className="ml-[10px] leading-[4px]">1.Customer no need to wait till the complete development of</Mini>
        <Mini w={15} className="ml-[10px] leading-[4px]">Software.</Mini>
        <Mini w={80} className="ml-[10px] mt-[2px] leading-[4px]">2.We will release the features in the form of release.</Mini>
        <Mini w={99} className="ml-[10px] leading-[4px]">3.We develop, test and release piece of s/w to the customer with</Mini>
        <Mini w={37} className="ml-[10px] leading-[4px]">few number of features.</Mini>
        <Mini w={82} className="ml-[10px] mt-[1px] leading-[4px]">4.we can accept/accommodate requirement changes.</Mini>
      </Thumb>
      <Thumb n="4">
        <Mini w={73} size={title} color="text-[#cf4136]">Advantages and disadvantages</Mini>
        <Mini w={21} className="mt-[6px] leading-[4px]" color="text-[#d04238]">• Advantages:</Mini>
        <Mini w={91} size="text-[3.600px]" className="ml-[3px] leading-[3.500px]">✚Accommodates requirement changes in the middle of development</Mini>
        <Mini w={36} size="text-[3.600px]" className="ml-[3px] leading-[3.500px]">✚Releases will be very fast</Mini>
        <Mini w={55} size="text-[3.600px]" className="ml-[3px] leading-[3.500px]">✚customer no need to wait for long time</Mini>
        <Mini w={52} size="text-[3.600px]" className="ml-[3px] leading-[3.500px]">✚Good communication between team</Mini>
        <Mini w={42} size="text-[3.600px]" className="ml-[3px] leading-[3.500px]">✚It is very easy model to adopt</Mini>
        <Mini w={23} className="leading-[4px]" color="text-[#d04238]">• Dis Advantages:</Mini>
        <Mini w={105} size="text-[3.600px]" className="ml-[3px] leading-[5px]">✚Less focus on design and documentation since we deliver software very faster</Mini>
      </Thumb>
      <Thumb n="5">
        <Mini w={37} size={title} color="text-[#333]">What is Scrum?</Mini>
        <Mini w={101} className="mt-[5px] leading-[4px]">• Scrum is a frame work through which we build a s/w product by</Mini>
        <Mini w={38} className="ml-[3px] leading-[4px]">following agile principle.</Mini>
        <Mini w={102} className="mt-[1px] leading-[4px]">• Different kind of people will be involved in scrum, like PO, Scrum</Mini>
        <Mini w={43} className="ml-[3px] leading-[4px]">master, Developers and QA</Mini>
        <Mini w={66} className="mt-[1px] leading-[5px]">• These all together works for specific goal</Mini>
      </Thumb>
      <Thumb n="6">
        <Mini w={46} size={title} color="text-[#c2302a]">Scrum Terminology</Mini>
        <div className="mt-[4px] flex flex-col">
          {terms.map(([t, w]) => (
            <Mini key={t} w={w} className="leading-[5.300px]">{t}</Mini>
          ))}
        </div>
      </Thumb>
      <Thumb n="7" active>
        <Mini w={46} size="text-[6.500px] leading-[5px]" color="text-[#c0395a]">Scrum Terminology</Mini>
        <Mini w={38} className="mt-[5px] leading-[5.300px]">• Sprint Review Meeting</Mini>
        <Mini w={22} className="leading-[5.300px]">• Story points</Mini>
        <Mini w={30} className="leading-[5.300px]">• Burndown charts</Mini>
      </Thumb>
      <Thumb n="8">
        <Mini w={31} size={title} color="text-[#c0395a]">Scrum Board</Mini>
        <Mini w={46} size="text-[3.500px] leading-[4px]" className="ml-[32px] mt-[4px] font-bold" color="text-[#444]">Scrum Task Board Template</Mini>
        <svg viewBox="0 0 101 43" className="ml-[5px] mt-[1px] h-[43px] w-[101px]">
          <rect width="101" height="43" fill="#d4d3d4" />
          <rect x="3" y="2" width="95" height="39" fill="#fbfbfb" />
          <path d="M3 2h95v5H3z" fill="#eee" />
          <path d="M18 2v39M46 2v39M62 2v39M78 2v39M3 27h95" stroke="#ccc" strokeWidth=".6" />
          <g fill="#ee8583"><path d="M4 7h12v8H4zM64 7h10v5H64zM68 13h10v5H68zM31 28h10v5H31z" /></g>
          <g fill="#f2c522"><path d="M19 7h12v7H19zM33 7h12v7H33zM19 17h12v7H19zM33 17h12v7H33zM80 7h13v8H80zM20 28h9v5H20zM20 34h9v5H20zM33 34h10v5H33zM64 28h10v5H64z" /></g>
          <g fill="#1b9fe5"><path d="M47 7h10v5H47zM51 13h9v5H51zM47 19h10v5H47zM64 19h10v5H64zM51 28h9v5H51zM47 34h13v6H47zM81 28h13v8H81z" /></g>
          <g fill="#82b84c"><path d="M4 29h12v8H4zM84 18h12v8H84zM66 34h10v5H66z" /></g>
          <path d="M8 10h5M22 10h6M36 10h6M22 20h6M36 20h6M49 9h5M53 15h5M49 21h5M66 9h5M70 15h5M66 21h5M83 10h6M87 22h6M8 32h5M84 32h6M53 30h5M49 37h8" stroke="#5a4a20" strokeOpacity=".4" strokeWidth=".8" />
        </svg>
      </Thumb>
    </div>
  );
}

function ScrollTriangle({ down = false, className }: { down?: boolean; className: string }) {
  return (
    <svg viewBox="0 0 8 6" className={`h-[6px] w-[7px] shrink-0 ${className}`} fill="#666">
      <path d={down ? "M0 0h8L4 6z" : "M0 6h8L4 0z"} />
    </svg>
  );
}

function Bullet({ w, children }: { w: number; children: string }) {
  return (
    <div className="flex h-[39px] items-center">
      <div className="mb-[3px] size-[7px] rounded-full bg-[#0f6fbd]" />
      <Fit w={w} className="ml-[9px] text-[24px] [-webkit-text-stroke:0.3px_#0f6fbd]">{children}</Fit>
    </div>
  );
}

function PptBody() {
  return (
    <div className="flex h-[535px]">
      <Thumbs />
      <div className="flex w-[13px] flex-col items-start border-r border-[#dddbdd] pl-[1px]">
        <ScrollTriangle className="" />
        <div className="mt-[53px] h-[153px] w-[6px] rounded-full bg-[#707070]" />
        <ScrollTriangle down className="mb-[2px] mt-auto" />
      </div>
      <div className="ml-[25px] mt-[2px] h-[525px] w-[931px] border border-[#dddbdd] bg-[#fdfcfe] font-['Lato']">
        <Fit w={328} className="ml-[70px] mt-[53px] text-[40px] leading-[48px] font-light text-[#b0203f] [-webkit-text-stroke:0.3px_#b0203f]">Scrum Terminology</Fit>
        <div className="relative ml-[71px] mt-[35px] text-[#0f6fbd]">
          <Bullet w={249}>Sprint Review Meeting</Bullet>
          <Bullet w={132}>Story points</Bullet>
          <Bullet w={189}>Burndown charts</Bullet>
          <Svg box="0 0 8 14" className="absolute left-[152px] top-[16px] h-[14px] w-[8px] text-[#333]">
            <path d="M1 .5h2.500l.5.500.5-.5H7M1 13.500h2.500l.5-.5.5.500H7M4 1v12" strokeWidth="1" />
          </Svg>
        </div>
      </div>
      <div className="ml-auto mr-[4px] flex w-[7px] flex-col items-center">
        <ScrollTriangle className="" />
        <div className="mt-[146px] h-[24px] w-[6px] rounded-full bg-[#707070]" />
        <ScrollTriangle down className="mt-auto" />
        <ScrollTriangle className="mt-[5px]" />
        <ScrollTriangle className="-mt-px" />
        <ScrollTriangle down className="mt-[2px]" />
        <ScrollTriangle down className="-mt-px mb-[16px]" />
      </div>
    </div>
  );
}

function PptStatus() {
  return (
    <div className="flex h-[18px] items-center border-t border-[#d8d6d8] bg-[#f4f3f4] text-[8.800px] text-[#555]">
      <Fit w={46} className="ml-[6px]">Slide 7 of 20</Fit>
      <Fit w={52} className="ml-[24px]">English (India)</Fit>
      <Svg box="0 0 12 12" className="ml-[42px] size-[12px] text-[#444]">
        <circle cx="5" cy="2" r="1.500" strokeWidth="1" />
        <path d="M.5 3.500L4 5v3l-2 3.500M9.500 3.500L6 5v2M6 8l5 4M11 8l-5 4M4 7h2" strokeWidth="1.200" />
      </Svg>
      <Fit w={88} className="ml-[2px]">Accessibility: Investigate</Fit>
      <Svg box="0 0 12 12" className="ml-[580px] size-[12px]">
        <path d="M0 5h12M0 8h12M0 11h12M4 2.500L6 .5l2 2" strokeWidth="1" />
      </Svg>
      <Fit w={22} className="ml-[2px]">Notes</Fit>
      <div className="ml-[14px] flex h-[17px] w-[31px] items-center justify-center bg-[#dddcdd]">
        <Svg box="0 0 12 10" className="h-[10px] w-[12px]"><path d="M.5.5h11v9H.5zM3 .5v9M5 2.500h5v3H5zM3 7.500h9" strokeWidth="1" /></Svg>
      </div>
      <Svg box="0 0 12 10" className="ml-[10px] h-[10px] w-[12px]"><path d="M.5.5h4v3h-4zM7.500.5h4v3h-4zM.5 6h4v3.500h-4zM7.500 6h4v3.500h-4z" strokeWidth="1" /></Svg>
      <Svg box="0 0 12 10" className="ml-[19px] h-[10px] w-[12px]"><path d="M.5.5h4L6 1.500 7.500.5h4v8h-4L6 9.500 4.500 8.500h-4zM6 1v8M2 3h2M2 5h2M8 3h2M8 5h2M2 7h2M8 7h2" strokeWidth="1" /></Svg>
      <Svg box="0 0 12 10" className="ml-[19px] h-[10px] w-[12px]"><path d="M0 .5h12M1.500 1v5h9V1M6 6v3.500M3.500 9.500h5M4 3h4" strokeWidth="1" /></Svg>
      <div className="ml-[15px] h-px w-[6px] bg-[#999]" />
      <div className="ml-[5px] flex h-[9px] w-[79px] items-center bg-[linear-gradient(#777,#777)] bg-[length:100%_1px] bg-center bg-no-repeat">
        <div className="ml-[34px] h-[9px] w-[5px] bg-[#555]" />
      </div>
      <Plus className="ml-[2px] size-[8px]" />
      <Fit w={17} className="ml-[9px]">92%</Fit>
      <Svg box="0 0 12 12" className="ml-[8px] size-[12px]"><path d="M3.500 3.500h5v5h-5zM4 2.500l2-2 2 2M4 9.500l2 2 2-2M2.500 4l-2 2 2 2M9.500 4l2 2-2 2" strokeWidth="1" /></Svg>
    </div>
  );
}

function SharedScreen() {
  return (
    <div className="ml-[142px] flex h-[703px] w-[1184px] flex-col overflow-hidden border-t border-[#8a868a] bg-[#efedef]">
      <PptTitleBar />
      <PptTabs />
      <Ribbon />
      <div className="pt-[6px]"><PptBody /></div>
      <div className="mt-auto"><PptStatus /></div>
    </div>
  );
}

/* ---------- Meeting controls ---------- */

function Control({ label, w, className, children }: { label: string; w: number; className: string; children: ReactNode }) {
  return (
    <div className={`flex flex-col items-center ${className}`}>
      {children}
      <Fit w={w} className="mt-[12px] text-[17px] leading-[24px] text-[#b0b0b0]">{label}</Fit>
    </div>
  );
}

function Controls() {
  const button = "flex h-[60px] items-center rounded-[16px] border border-[#3d3f41]";
  return (
    <div className="flex pt-[21px]">
      <Control label="Record" w={54} className="ml-[55px] w-[60px]">
        <div className={`${button} w-[60px] justify-center`}>
          <Svg box="0 0 34 34" className="size-[34px] text-[#6a6a6a]">
            <circle cx="17" cy="17" r="15.500" strokeWidth="2.800" />
            <circle cx="17" cy="17" r="7" fill="currentColor" stroke="none" />
          </Svg>
        </div>
      </Control>
      <Control label="React" w={43} className="ml-[33px] w-[90px]">
        <div className={`${button} w-[90px]`}>
          <div className="flex h-full w-[60px] items-center justify-center border-r border-[#3d3f41]">
            <Svg box="0 0 30 36" className="mr-[2px] h-[35px] w-[30px] text-white">
              <path d="M11 20V5.500M15.300 17V1M19.600 17V3.500M24 17V7.500" strokeWidth="2.400" />
              <path d="M24 7v0c2.500 0 4.200.5 4.200 3v12.500c0 7-3.700 12-9.700 12-4.500 0-7-3-9-7L2 19c-.5-2 1.500-3 3.500-2l5.500 6V8" strokeWidth="2.600" />
            </Svg>
          </div>
          <ChevronUp className="ml-[5px] size-[18px] text-white" strokeWidth={2.6} />
        </div>
      </Control>
      <Control label="Mic" w={28} className="ml-[313px] w-[60px]">
        <div className={`${button} w-[60px] justify-center`}>
          <Svg box="0 0 36 36" className="size-[36px] text-white">
            <rect x="13" y="1.500" width="10" height="20" rx="5" strokeWidth="2.600" />
            <path d="M7 14v4c0 6 4.500 9.500 11 9.500S29 24 29 18v-4M18 27v7M11 34h14" strokeWidth="2.800" />
            <path d="M2 33L33 2" stroke="#0a0d0e" strokeWidth="5" />
            <path d="M2 35L35 1" strokeWidth="2.800" />
          </Svg>
        </div>
      </Control>
      <Control label="Camera" w={59} className="ml-[32px] w-[60px]">
        <div className={`${button} w-[60px] justify-center`}>
          <Svg box="0 0 36 36" className="size-[36px] text-white">
            <path d="M2 8h22v20H2zM24 18l10-8v16z" strokeWidth="2.800" />
            <path d="M1 33L34 0" stroke="#12171a" strokeWidth="5" />
            <path d="M1 35L35 1" strokeWidth="2.800" />
          </Svg>
        </div>
      </Control>
      <Control label="Share" w={44} className="ml-[33px] w-[90px]">
        <div className={`${button} w-[90px] text-[#5a5a5a]`}>
          <div className="flex h-full w-[60px] items-center justify-center border-r border-[#3d3f41]">
            <Svg box="0 0 36 36" className="size-[36px]">
              <path d="M2 5h32v20H2zM18 25v6M10 32h16M15 10l8 5-8 5z" strokeWidth="2.500" />
              <path d="M2 33L33 2" stroke="#000" strokeWidth="5" />
              <path d="M2 35L35 1" strokeWidth="2.500" />
            </Svg>
          </div>
          <ChevronUp className="ml-[5px] size-[18px]" strokeWidth={2.2} />
        </div>
      </Control>
      <Control label="Leave" w={44} className="ml-[32px] w-[60px]">
        <div className="flex size-[60px] items-center justify-center rounded-[16px] bg-[#d33a62]">
          <Svg box="0 0 26 26" className="size-[26px] text-black">
            <path d="M1 1l24 24M25 1L1 25" strokeWidth="2.600" />
          </Svg>
        </div>
      </Control>
      <div className="ml-[326px] mt-[15px] flex h-[40px] w-[130px] items-center rounded-[4px] border border-[#46525c] bg-black text-white">
        <Minus className="ml-[10px] size-[16px]" strokeWidth={2} />
        <Fit w={17} className="ml-[29px] text-[15px] font-semibold">Fit</Fit>
        <Plus className="ml-[29px] size-[16px]" strokeWidth={2} />
      </div>
      <div className="ml-[10px] mt-[15px] flex size-[40px] items-center justify-center rounded-[4px] border border-[#3d3f41] text-white">
        <Svg box="0 0 16 13" className="mb-[2px] h-[13px] w-[16px]">
          <path d="M.8 2.500h3.500L6 .8h4l1.500 1.700h3.700v9.700H.8z" />
          <circle cx="8" cy="7" r="2.500" />
        </Svg>
      </div>
    </div>
  );
}

/* ---------- Chat ---------- */

type Message = { time: string; tw: number; who: string; ww: number; lines: [string, number][] };

const messages: Message[] = [
  { time: "11:54 AM", tw: 73, who: "Attendee 68", ww: 97, lines: [["To derive agile process", 200]] },
  { time: "12:02 PM", tw: 72, who: "Attendee 164", ww: 105, lines: [["Signoff?", 72]] },
  { time: "12:10 PM", tw: 72, who: "Attendee 110", ww: 102, lines: [["Are the HRs involved in scrum", 264], ["team", 44]] },
  { time: "12:13 PM", tw: 72, who: "Attendee 171", ww: 102, lines: [["No", 27]] },
];

function Chat() {
  return (
    <div className="flex w-[451px] flex-col border-l border-[#46525c] bg-black">
      <div className="flex h-[91px] items-center border-b border-[#46525c]">
        <Fit w={53} className="ml-[20px] mt-[2px] text-[21.500px] font-semibold text-white">Chat</Fit>
        <div className="mb-[34px] ml-[121px] size-[5px] rounded-full bg-[#e81414]" />
        <Svg box="0 0 20 20" className="ml-auto mr-[20px] size-[20px] text-[#dfe6ee]">
          <path d="M.7.7l18.600 18.600M19.300.7L.7 19.300" strokeWidth="2" />
        </Svg>
      </div>
      <div className="flex h-[545px]">
        <div className="flex h-[545px] w-[429px] flex-col overflow-hidden pl-[20px]">
          <div className="flex h-[51px] shrink-0 items-end">
            <div className="flex h-[51px] w-[45px] flex-col">
              <div className="-mt-[41px] size-[45px] shrink-0 rounded-full bg-[#161718]" />
            </div>
            <div className="ml-[10px] flex h-[51px] w-[334px] items-center rounded-b-[9px] bg-[#2b3138] pl-[15px]">
              <Fit w={105} className="mt-[3px] text-[18px] text-[#f2f4f6]">Scrum team</Fit>
            </div>
          </div>
          {messages.map((m) => (
            <div key={m.time} className="mt-[20px] flex shrink-0">
              <div className="flex size-[45px] items-center justify-center rounded-full bg-[#161718] text-[16px] font-semibold text-[#a9adb1]">A</div>
              <div className="ml-[10px] w-[334px] rounded-[9px] rounded-tl-none bg-[#2b3138] pb-[9px] text-[#f2f4f6]">
                <div className="flex h-[52px] items-center pb-[5px] pl-[15px] pr-[15px] text-[16px]">
                  <Fit w={m.tw}>{m.time}</Fit>
                  <div className="ml-auto flex gap-[5px] font-semibold">
                    <Fit w={m.ww} className="text-[#45c768]">{m.who}</Fit>
                    <Fit w={98} className="font-bold">to Everyone</Fit>
                  </div>
                </div>
                {m.lines.map(([t, w]) => (
                  <div key={t} className="flex h-[30px] items-center pl-[15px] text-[18px]">
                    <Fit w={w}>{t}</Fit>
                  </div>
                ))}
              </div>
            </div>
          ))}
        </div>
        <div className="flex h-[545px] w-[21px] flex-col items-center bg-[#f1f1f1]">
          <div className="mt-[9px] h-0 w-0 border-x-[4.500px] border-b-[5px] border-x-transparent border-b-[#505050]" />
          <div className="mt-[469px] h-[41px] w-[17px] bg-[#c1c1c1]" />
          <div className="mt-[8px] h-0 w-0 border-x-[4.500px] border-t-[5px] border-x-transparent border-t-[#a3a3a3]" />
        </div>
      </div>
      <div className="ml-[17px] mt-[17px] h-[106px] w-[416px] rounded-[9px] border border-white p-[2px]">
        <div className="flex h-full rounded-[6px] border border-[#5a6670] pl-[20px] pt-[7px]">
          <div className="h-[30px] w-[2px] bg-white" />
          <Fit w={195} className="-ml-px text-[20.500px] leading-[30px] text-[#8c949b]">Enter your message</Fit>
        </div>
      </div>
      <div className="mt-[7px] flex items-center">
        <Fit w={27} className="ml-[20px] text-[18px] font-semibold text-white">To:</Fit>
        <div className="ml-[24px] flex h-[50px] w-[359px] items-center rounded-[3px] border border-[#46525c] pl-[15px]">
          <Fit w={151} className="text-[18.500px] text-white">Organizer(s) only</Fit>
        </div>
      </div>
    </div>
  );
}

/* ---------- Taskbar ---------- */

function TaskIcon({ children, mark }: { children: ReactNode; mark?: string }) {
  return (
    <div className="flex h-[60px] w-[55px] flex-col items-center pt-[15px]">
      <svg viewBox="0 0 30 30" className="size-[30px]">{children}</svg>
      {mark && <div className={`mt-[5px] h-[4px] rounded-full ${mark}`} />}
    </div>
  );
}

function Taskbar() {
  return (
    <div className="flex h-[60px] bg-[linear-gradient(90deg,#202225_0px,#212124_215px,#3d1524_265px,#2a2028_320px,#2c1c26_370px,#3c1522_415px,#2a1d2c_460px,#281c30_520px,#22202a_620px,#202124_700px,#212225_1110px,#4c1113_1170px,#4a1214_1200px,#2b2023_1270px,#211f21_1400px,#232426_1490px,#2a1f24_1590px,#3a1d28_1670px,#351d27_1760px)]">
      <div className="flex w-[575px] items-center">
        <Svg box="0 0 24 24" className="ml-[25px] size-[24px]">
          <circle cx="12.500" cy="9.500" r="9" fill="#fba918" stroke="none" />
          <circle cx="12" cy="15" r="5" fill="#d3b8ac" stroke="none" />
          <path d="M5 23a4.500 4.500 0 0 1 0-8 6 6 0 0 1 11-.5 4.500 4.500 0 0 1 3 8.500z" fill="#a9b4c2" fillOpacity=".85" stroke="none" />
        </Svg>
        <div className="ml-[10px] mt-[2px] flex flex-col text-[14px] leading-[20px] text-white">
          <Fit w={30}>31°C</Fit>
          <Fit w={34} className="text-[#d0d0d2]">Haze</Fit>
        </div>
      </div>
      <TaskIcon>
        <defs>
          <linearGradient id="win" x1="0" y1="0" x2="1" y2="1"><stop offset="0" stopColor="#7adcff" /><stop offset="1" stopColor="#0a8ff5" /></linearGradient>
        </defs>
        <path d="M0 1h14.300v14H0zM15.300 1H30v14H15.300zM0 16h14.300v14H0zM15.300 16H30v14H15.300z" fill="url(#win)" />
      </TaskIcon>
      <TaskIcon>
        <circle cx="16.500" cy="12" r="10" fill="#4b4b4d" stroke="#e6e6e6" strokeWidth="2.500" />
        <path d="M9.500 20l-6 7.500" stroke="#e6e6e6" strokeWidth="3.500" strokeLinecap="round" />
      </TaskIcon>
      <TaskIcon>
        <rect x="7.500" y="1.500" width="22" height="20" rx="1.500" fill="#eeeeee" />
        <rect x="0" y="8.500" width="22" height="20" rx="1.500" fill="#6d6d6d" fillOpacity=".92" />
        <path d="M7.500 8.500H22v13H7.500z" fill="#a8a8a8" />
      </TaskIcon>
      <TaskIcon>
        <path d="M15 1a14 14 0 0 1 0 28H2l2-5A14 14 0 0 1 15 1z" fill="#6667cf" />
        <path d="M15 1a14 14 0 0 1 14 14c-7-1-14-7-14-14z" fill="#8b80dc" />
        <rect x="7" y="9.500" width="12" height="11" rx="2" fill="#fff" />
        <path d="M20 13.500l4-3v9l-4-3z" fill="#fff" />
      </TaskIcon>
      <TaskIcon mark="w-[7px] bg-[#a3a3a5]">
        <path d="M0 3a1 1 0 0 1 1-1h9l3 4h12v6H0z" fill="#d9940f" />
        <path d="M0 6h30v21a1.500 1.500 0 0 1-1.500 1.500h-27A1.500 1.500 0 0 1 0 27z" fill="#ffca3a" />
        <path d="M5 28.500V23a2 2 0 0 1 2-2h16a2 2 0 0 1 2 2v5.500z" fill="#1484d6" />
        <path d="M9 25h12" stroke="#0b4f94" strokeWidth="1.500" />
      </TaskIcon>
      <TaskIcon>
        <defs>
          <linearGradient id="edge" x1="0" y1="0" x2="1" y2="0.400"><stop offset="0" stopColor="#1f9de0" /><stop offset=".6" stopColor="#39c6c6" /><stop offset="1" stopColor="#62d84d" /></linearGradient>
        </defs>
        <circle cx="15" cy="15" r="14.500" fill="#0f62b8" />
        <path d="M.6 14C1 6 7 .5 15 .5S29.500 6 29.500 12.500c0 4-3 6.500-7 6.500-3 0-5-1-4-2.500C20 14 18 10 13 10 7 10 1.500 12 .6 14z" fill="url(#edge)" />
        <path d="M10 17c0 6 6 9.500 11 8.500s7-2.500 7.500-3c-3 5-8 7-13 7C9 29 5 24 5.500 18S9.500 10 13 10c-2 1.500-3 4-3 7z" fill="#1b7fd4" />
        <path d="M18.500 16.500C17.500 18 19.500 19 22.500 19a8 8 0 0 0 6.500-3v5.500c-4 3-14 3.500-14-4 0-2 1.500-3.500 3-3.500z" fill="#202226" />
      </TaskIcon>
      <TaskIcon>
        <path d="M9.500 8V2.500A1.500 1.500 0 0 1 11 1h8a1.500 1.500 0 0 1 1.500 1.500V8" fill="none" stroke="#27a8e6" strokeWidth="2" />
        <path d="M1 6.500h28V26a3.500 3.500 0 0 1-3.500 3.500h-21A3.500 3.500 0 0 1 1 26z" fill="#f3f3f3" />
        <path d="M9.500 12h5v5h-5z" fill="#f25022" /><path d="M15.500 12h5v5h-5z" fill="#7fba00" />
        <path d="M9.500 18h5v5h-5z" fill="#00a4ef" /><path d="M15.500 18h5v5h-5z" fill="#ffb900" />
      </TaskIcon>
      <TaskIcon>
        <path d="M0 0h30v30H0z" fill="#27a9dc" />
        <path d="M8 4l3 20h12v1H6z" fill="#0a3768" />
        <path d="M10 4h5v14.500h8V23H10z" fill="#fff" />
      </TaskIcon>
      <TaskIcon>
        <path d="M12 28.200A13.500 13.500 0 1 1 16.500 28.400" fill="none" stroke="#08c8fa" strokeWidth="3.400" />
      </TaskIcon>
      <TaskIcon>
        <path d="M2 0l13 6.500L28 0v24l-13 6L2 24z" fill="#c4312e" />
        <path d="M7 8.500l8 4 8-4V21l-8 3.500L7 21z" fill="#232326" />
      </TaskIcon>
      <TaskIcon>
        <circle cx="15" cy="15" r="13.500" fill="#f3b91f" />
        <path d="M15 15L4 5A14 14 0 0 1 28.500 14z" fill="#e8254c" />
        <path d="M15 15l-2 13.500A14 14 0 0 1 6 3.500z" fill="#45a5f5" />
        <path d="M15 6c3 2 5 2 8 2v6c0 5-4 8-8 9.500C11 22 7 19 7 14V8c3 0 5 0 8-2z" fill="#fff" />
        <circle cx="15" cy="12.500" r="2.500" fill="#444" /><path d="M14 13h2v6h-2z" fill="#444" />
      </TaskIcon>
      <TaskIcon mark="w-[8px] bg-[#b09a9c]">
        <circle cx="14.500" cy="15" r="14" fill="#f29324" />
        <circle cx="16" cy="15" r="14" fill="#2c2255" />
        <path d="M2.500 11h27.500M2 15h28M2.500 19h27.500" stroke="#fff" strokeWidth="1.800" />
      </TaskIcon>
      <TaskIcon mark="w-[8px] bg-[#a3a3a5]">
        <path d="M0 9h30v20a1 1 0 0 1-1 1H1a1 1 0 0 1-1-1z" fill="#0f6ccf" />
        <path d="M0 4l30-3v5L0 9z" fill="#2fb4ec" />
        <path d="M6 3.500l4 4.500M14 2.500l4 4.500M22 2l4 4.500" stroke="#0f6ccf" strokeWidth="1.500" />
        <path d="M11.500 13l9.500 6.500-9.500 6.500z" fill="#fff" />
      </TaskIcon>
      <div className="flex w-[55px] justify-center pt-[5px]">
        <div className="relative flex h-[50px] w-[50px] flex-col items-center rounded-[5px] border border-[#3c393b] bg-[#313032] pt-[9px]">
          <svg viewBox="0 0 30 30" className="size-[30px]">
            <circle cx="15" cy="15" r="14" fill="#30a24d" />
            <path d="M15 15L2.900 8A14 14 0 0 1 27.100 8z" fill="#e33b2e" />
            <path d="M15 15L27.100 8A14 14 0 0 1 15 29l-1-.1z" fill="#fbc116" />
            <path d="M2.900 8L15 8l-6 10.500z" fill="#e33b2e" />
            <circle cx="15" cy="15" r="6.500" fill="#fff" /><circle cx="15" cy="15" r="5" fill="#3a7bea" />
          </svg>
          <div className="mt-[5px] h-[4px] w-[20px] rounded-full bg-[#f0785a]" />
          <div className="absolute left-[25px] top-[4px] flex size-[20px] items-center justify-center rounded-full bg-[#064e3f] pb-px text-[11px] text-white">k</div>
        </div>
      </div>
      <div className="ml-[157px] flex items-center text-white">
        <Svg box="0 0 18 10" className="h-[10px] w-[17px]"><path d="M1 9l8-8 8 8" /></Svg>
        <Svg box="0 0 20 14" className="ml-[12px] h-[14px] w-[20px]">
          <path d="M4 13a4 4 0 0 1 0-8 6 6 0 0 1 11-1 4.500 4.500 0 0 1 1.500 9z" fill="#a9a9a9" stroke="none" />
          <path d="M2 10l9-4 8 4c1 1 0 3.500-2 3.500H4c-2 0-3-2-2-3.500z" fill="#fff" stroke="none" />
        </Svg>
        <Svg box="0 0 22 22" className="ml-[10px] size-[21px]">
          <path d="M2 9A8.500 8.500 0 0 1 18 6M19 1v6h-6M18 13a8 8 0 0 1-15 2M2 21v-6h6" strokeWidth="1.400" />
          <circle cx="16" cy="16.500" r="5.300" fill="#fc9a0a" stroke="none" />
        </Svg>
        <Svg box="0 0 14 20" className="ml-[17px] h-[20px] w-[14px] text-[#e8977f]">
          <rect x="4" y="1" width="6" height="12" rx="3" /><path d="M1 9c0 4.500 2.500 6.500 6 6.500s6-2 6-6.500M7 15.500V20" />
        </Svg>
        <div className="ml-[26px] mt-[2px] flex w-[30px] flex-col items-center text-[14px] leading-[20px]">
          <Fit w={29}>ENG</Fit><Fit w={15}>IN</Fit>
        </div>
        <Svg box="0 0 22 17" className="ml-[21px] h-[16px] w-[21px]">
          <path d="M1 6a14 14 0 0 1 20 0M4 9.500a9.500 9.500 0 0 1 14 0M7 12.500a5.500 5.500 0 0 1 8 0" /><circle cx="11" cy="15" r="1.800" fill="currentColor" stroke="none" />
        </Svg>
        <Svg box="0 0 20 18" className="ml-[9px] h-[17px] w-[20px]">
          <path d="M1 6h3.500L9 2v14l-4.500-4H1zM11.500 6a4 4 0 0 1 0 6" /><path d="M14 3.500a7.500 7.500 0 0 1 0 11M16.500 1a11 11 0 0 1 0 16" stroke="#7a6a70" />
        </Svg>
      </div>
    </div>
  );
}

/* ---------- Floating recorder ---------- */

function RecorderPanel() {
  const btn = "flex h-[22px] w-[26px] items-center justify-center border border-t-white border-l-white border-r-[#888] border-b-[#888] bg-gradient-to-b from-white to-[#cfcfcf]";
  return (
    <div className="absolute left-[1751px] top-[920px] flex h-[160px] w-[168px] flex-col bg-[#0567d0] px-[3px] pb-[3px]">
      <div className="flex h-[32px] items-center">
        <Svg box="0 0 19 19" className="ml-[3px] size-[19px]">
          <circle cx="9.500" cy="9.500" r="9.500" fill="#1c4d6e" stroke="none" />
          <path d="M9 1a8.500 8.500 0 0 0 0 17c-3-5-3-12 0-17z" fill="#2a8be0" stroke="none" />
          <path d="M9 1a8.500 8.500 0 0 1 0 17c-2-5-2-12 0-17z" fill="#9bdc1c" stroke="none" />
        </Svg>
        <Fit w={108} className="ml-[3px] font-['DejaVu_Sans'] text-[13.500px] font-bold text-white">Recorder Panel</Fit>
      </div>
      <div className="flex h-[125px] flex-col bg-[#dedede] px-[7px] pt-[7px]">
        <div className="flex gap-[3px]">
          <div className={btn}><div className="size-[12px] rounded-full bg-[#c4c4c4]" /></div>
          <div className={`${btn} gap-[3px]`}><div className="h-[12px] w-[3px] bg-black" /><div className="h-[12px] w-[3px] bg-black" /></div>
          <div className={btn}><div className="size-[12px] bg-black" /></div>
          <div className={btn}>
            <Svg box="0 0 16 16" className="size-[16px] text-black">
              <path d="M0 5h16M0 10h16M0 15h16M8 3v10M5 1h6L8 4z" strokeWidth="1.200" /><path d="M1 7.500h14M1 12.500h14" strokeWidth="2.500" strokeDasharray="2 1.500" />
            </Svg>
          </div>
          <div className={btn}>
            <Svg box="0 0 16 14" className="h-[14px] w-[16px]">
              <path d="M9 1l6 4-2 2-6 3-5 3 1-4 5-4z" fill="#f2df1c" stroke="#222" strokeWidth="1.200" /><path d="M6 5l4 4" stroke="#222" />
            </Svg>
          </div>
        </div>
        <div className="mt-[7px] flex h-[63px] w-[150px] rounded-[5px] border border-[#999] bg-gradient-to-b from-[#c8c8c8] to-[#f0f0f0]">
          <div className="flex w-[118px] flex-col">
            <div className="ml-[7px] mt-[6px] flex h-[18px] items-center">
              <div className="flex size-[17px] shrink-0 items-center justify-center border border-[#22558a] bg-white">
                <Svg box="0 0 12 12" className="size-[11px] text-[#1f9a1f]"><path d="M1.500 5l3 4L10.500 2" strokeWidth="2.800" /></Svg>
              </div>
              <Fit w={92} className="ml-[6px] font-['DejaVu_Sans'] text-[13px] text-[#222]">Record Audio</Fit>
            </div>
            <div className="mt-[5px] flex h-[26px] items-center">
              <Svg box="0 0 16 18" className="ml-[10px] mt-[4px] h-[18px] w-[16px]">
                <path d="M1 3l3-3 4 3 1 3-3 2-4-1z" fill="#3c79e0" stroke="none" /><path d="M5 5l7 8" stroke="#1c3c9c" strokeWidth="4" /><path d="M3 15h6c3 0 3-2 5 2" stroke="#1c3c9c" strokeWidth="1.200" />
              </Svg>
              <div className="ml-[4px] mt-[-2px] h-[4px] w-[66px] shrink-0 border-t border-[#333] bg-[#0f0]" />
              <Svg box="0 0 14 23" className="h-[23px] w-[14px]"><path d="M.7.7h12.600V15L7 22 .7 15z" fill="#d8d8d8" stroke="#666" strokeWidth="1.400" /></Svg>
              <div className="flex flex-col items-center text-[11px] leading-[8px] text-[#666]"><div className="h-[4px] w-[6px] bg-[#555]" />+</div>
            </div>
          </div>
          <div className="ml-[8px] mt-[6px] flex h-[49px] w-[14px] flex-col gap-px border border-black bg-black pt-[3px]">
            <div className="flex-1 bg-[#068006]" /><div className="flex-1 bg-[#068006]" /><div className="flex-1 bg-[#068006]" />
            <div className="flex-1 bg-[#068006]" /><div className="flex-1 bg-[#068006]" /><div className="flex-1 bg-[#068006]" /><div className="flex-1 bg-[#068006]" />
          </div>
        </div>
        <div className="mt-[4px] flex h-[18px] w-[149px] items-center bg-black pl-[2px] pt-px">
          <Fit w={142} className="font-['DejaVu_Sans'] text-[13.500px] leading-[16px] text-[#0bc80b]">01:07:23 / 234,90...</Fit>
        </div>
      </div>
    </div>
  );
}

export default function App() {
  return (
    <div className="relative flex h-[1080px] w-[1920px] flex-col overflow-hidden bg-black font-['Open_Sans',sans-serif]">
      <TabStrip />
      <AddressRow />
      <Bookmarks />
      <MeetingHeader />
      <div className="flex h-[835px]">
        <div className="relative w-[1469px] overflow-hidden">
          {/* backdrop artwork behind the shared screen */}
          <svg viewBox="0 0 1469 835" className="absolute inset-0 h-[835px] w-[1469px] fill-[#12171a]">
            <path d="M0 175L142 345V445L36 650 0 575L122 354L0 285zM558 708h105l41 127H600zM1326 0h73c15 35 22 70 22 105 0 75-40 130-95 170z" />
          </svg>
          <div className="relative flex flex-col pt-[5px]">
            <SharedScreen />
            <Controls />
          </div>
        </div>
        <Chat />
      </div>
      <Taskbar />
      <RecorderPanel />
    </div>
  );
}
